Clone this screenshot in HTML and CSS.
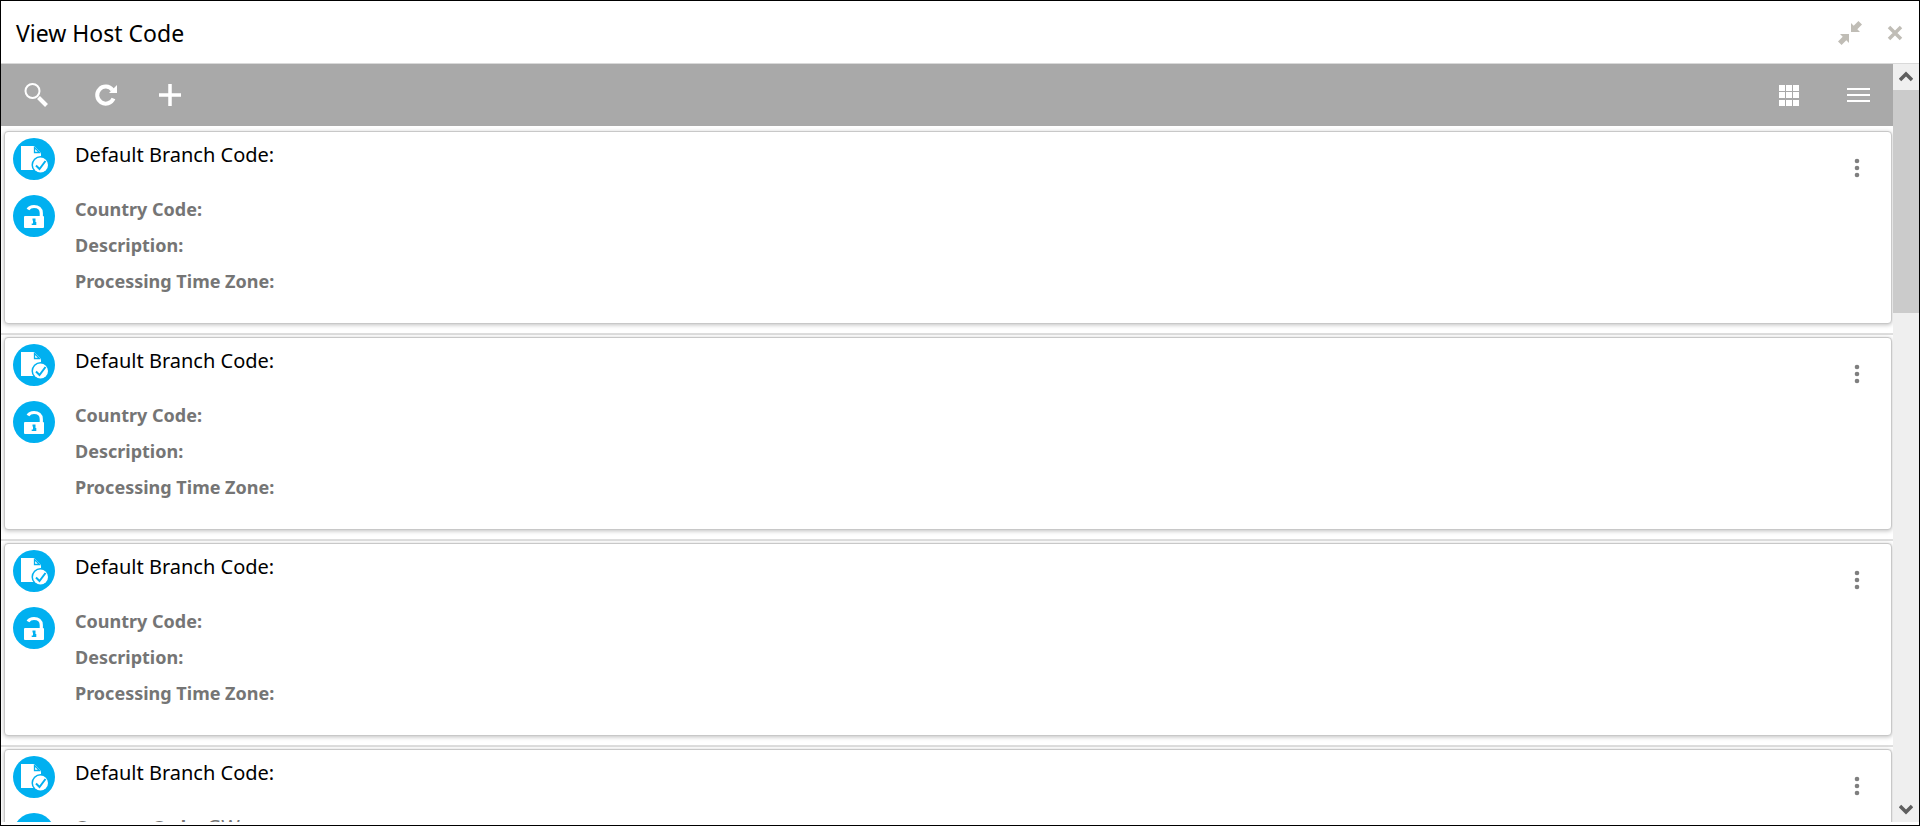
FILE: index.html
```html
<!DOCTYPE html>
<html lang="en">
<head>
<meta charset="utf-8">
<title>View Host Code</title>
<link rel="stylesheet" href="styles.css">
</head>
<body>
<svg class="sprite" aria-hidden="true">
  <symbol id="doc" viewBox="0 0 42 42">
    <circle cx="21" cy="21" r="21" fill="#00b0f0"/>
    <path d="M8 8h13l7 7v17H8z" fill="#fff"/>
    <path d="M21.500 9.500v5h5z" fill="#fff" stroke="#00b0f0" stroke-width="1.300"/>
    <circle cx="27.500" cy="27" r="9" fill="#00b0f0"/>
    <circle cx="27.500" cy="27" r="7.500" fill="#fff"/>
    <path d="M23 27.500l3.500 3.500 6-8" fill="none" stroke="#00b0f0" stroke-width="2"/>
  </symbol>
  <symbol id="lock" viewBox="0 0 42 42">
    <circle cx="21" cy="21" r="21" fill="#00b0f0"/>
    <path d="M15 14.500c1.200-2 3.200-3 6-3 4.300 0 7.300 2.500 7.300 6.500v4" fill="none" stroke="#fff" stroke-width="3.200"/>
    <rect x="11" y="21" width="20" height="12" rx="1" fill="#fff"/>
    <path d="M19.500 23.500h3v3.500h.8v3h-4.600v-1.500h1.300v-3h-.5z" fill="#00b0f0"/>
  </symbol>
  <symbol id="dots" viewBox="0 0 6 20">
    <g fill="#7f7f7f"><circle cx="3" cy="3" r="2.300"/><circle cx="3" cy="10" r="2.300"/><circle cx="3" cy="17" r="2.300"/></g>
  </symbol>
</svg>
<main class="window">
  <header class="titlebar">
    <h1 class="title">View Host Code</h1>
    <button class="icon-button" aria-label="Collapse"><svg width="24" height="24" viewBox="0 0 24 24" fill="#c0bdb6"><path d="M13 2v9h9l-2.700-2.700L24 3.600 20.400 0l-4.700 4.700zM11 22v-9H2l2.700 2.700L0 20.400 3.600 24l4.700-4.700z"/></svg></button>
    <button class="icon-button" aria-label="Close"><svg width="16" height="16" viewBox="0 0 16 16"><path d="M2 2l12 12M14 2L2 14" stroke="#c0bdb6" stroke-width="3.500"/></svg></button>
  </header>
  <div class="content">
    <div class="pane">
      <div class="toolbar">
        <button class="icon-button" aria-label="Search"><svg width="24" height="24" viewBox="0 0 24 24" fill="none" stroke="#fff"><circle cx="8.500" cy="8" r="7" stroke-width="2"/><path d="M14.500 14.500l8 8" stroke-width="4"/></svg></button>
        <button class="icon-button" aria-label="Refresh"><svg width="24" height="24" viewBox="0 0 24 24"><path d="M19.500 15.500a8.500 8.500 0 1 1-1-8.500" fill="none" stroke="#fff" stroke-width="4"/><path d="M23 2v8h-8z" fill="#fff"/></svg></button>
        <button class="icon-button" aria-label="Add"><svg width="24" height="24" viewBox="0 0 24 24"><path d="M12 1v22M1 12h22" stroke="#fff" stroke-width="3.500"/></svg></button>
        <span class="spacer"></span>
        <button class="icon-button" aria-label="Grid view"><svg width="20" height="21" viewBox="0 0 20 21" fill="#fff"><path d="M0 0h6v6H0zM7 0h6v6H7zM14 0h6v6h-6zM0 7h6v6H0zM7 7h6v6H7zM14 7h6v6h-6zM0 15h6v6H0zM7 15h6v6H7zM14 15h6v6h-6z"/></svg></button>
        <button class="icon-button" aria-label="List view"><svg width="23" height="14" viewBox="0 0 23 14" fill="#fff"><path d="M0 0h23v2H0zM0 6h23v2H0zM0 12h23v2H0z"/></svg></button>
      </div>
      <ul class="list">
        <li class="row"><article class="card">
          <div class="badges"><svg class="badge"><use href="#doc"/></svg><svg class="badge"><use href="#lock"/></svg></div>
          <div class="details"><h2 class="name">Default Branch Code:</h2>
            <dl class="fields"><div><dt>Country Code:</dt></div><div><dt>Description:</dt></div><div><dt>Processing Time Zone:</dt></div></dl></div>
          <button class="icon-button more" aria-label="More options"><svg width="6" height="20"><use href="#dots"/></svg></button>
        </article></li>
        <li class="row"><article class="card">
          <div class="badges"><svg class="badge"><use href="#doc"/></svg><svg class="badge"><use href="#lock"/></svg></div>
          <div class="details"><h2 class="name">Default Branch Code:</h2>
            <dl class="fields"><div><dt>Country Code:</dt></div><div><dt>Description:</dt></div><div><dt>Processing Time Zone:</dt></div></dl></div>
          <button class="icon-button more" aria-label="More options"><svg width="6" height="20"><use href="#dots"/></svg></button>
        </article></li>
        <li class="row"><article class="card">
          <div class="badges"><svg class="badge"><use href="#doc"/></svg><svg class="badge"><use href="#lock"/></svg></div>
          <div class="details"><h2 class="name">Default Branch Code:</h2>
            <dl class="fields"><div><dt>Country Code:</dt></div><div><dt>Description:</dt></div><div><dt>Processing Time Zone:</dt></div></dl></div>
          <button class="icon-button more" aria-label="More options"><svg width="6" height="20"><use href="#dots"/></svg></button>
        </article></li>
        <li class="row"><article class="card">
          <div class="badges"><svg class="badge"><use href="#doc"/></svg><svg class="badge"><use href="#lock"/></svg></div>
          <div class="details"><h2 class="name">Default Branch Code:</h2>
            <dl class="fields"><div><dt>Country Code:</dt> <dd>GW</dd></div></dl></div>
          <button class="icon-button more" aria-label="More options"><svg width="6" height="20"><use href="#dots"/></svg></button>
        </article></li>
      </ul>
    </div>
    <div class="scrollbar">
      <button class="arrow" aria-label="Scroll up"><svg width="14" height="12" viewBox="0 0 14 12"><path d="M1 9l6-6 6 6" fill="none" stroke="#5f5f5f" stroke-width="3.500"/></svg></button>
      <div class="track"><div class="thumb"></div></div>
      <button class="arrow" aria-label="Scroll down"><svg width="14" height="12" viewBox="0 0 14 12"><path d="M1 3l6 6 6-6" fill="none" stroke="#5f5f5f" stroke-width="3.500"/></svg></button>
    </div>
  </div>
</main>
</body>
</html>
```
FILE: styles.css
```css
* { box-sizing: border-box; }
body { margin: 0; font-family: "Segoe UI", "Noto Sans", sans-serif; color: #000; }
.sprite { display: none; }
.window { display: flex; flex-direction: column; height: 100vh; padding-bottom: 3px; border: 1px solid #000; background: #fff; overflow: hidden; }
.icon-button { display: flex; padding: 0; border: 0; background: none; }
.titlebar { display: flex; align-items: center; gap: 25px; flex: none; height: 63px; padding: 2px 16px 0 15px; border-bottom: 1px solid #d9d9d9; }
.title { flex: 1; margin: 0; font-size: 23px; font-weight: 400; line-height: 32px; }
.content { display: flex; flex: 1; min-height: 0; }
.pane { flex: 1; min-width: 0; overflow: hidden; background: #fff; }
.toolbar { display: flex; align-items: center; height: 62px; padding: 0 23px; background: #a9a9a9; }
.toolbar .icon-button { margin-right: 46px; }
.toolbar .icon-button + .icon-button { margin-right: 40px; }
.spacer { flex: 1; }
.toolbar .spacer + .icon-button { margin-right: 48px; }
.toolbar .icon-button:last-child { margin-right: 0; }
.list { margin: 0; padding: 3px 0 0; list-style: none; }
.row { padding: 2px 1px 9px 3px; border-bottom: 2px solid #dedede; }
.card { display: flex; height: 193px; padding: 6px 31px 0 8px; border: 1px solid #c8c8c8; border-radius: 4px; background: #fff; box-shadow: 0 1px 4px rgba(0, 0, 0, .25); }
.badges { display: flex; flex-direction: column; gap: 15px; }
.badge { display: block; width: 42px; height: 42px; }
.details { flex: 1; padding-left: 20px; }
.name { margin: 3px 0 22px; font-size: 20px; font-weight: 400; line-height: 28px; }
.fields { margin: 0; color: #757575; font-size: 18px; line-height: 36px; }
.fields dt { display: inline; font-weight: 700; }
.fields dd { display: inline; margin: 0; font-size: 20px; }
.more { align-self: flex-start; margin-top: 20px; }
.scrollbar { display: flex; flex-direction: column; flex: none; width: 26px; background: #efefef; }
.arrow { display: flex; align-items: center; justify-content: center; height: 26px; padding: 0; border: 0; background: none; }
.track { flex: 1; }
.thumb { height: 223px; background: #cbcbcb; }
```
